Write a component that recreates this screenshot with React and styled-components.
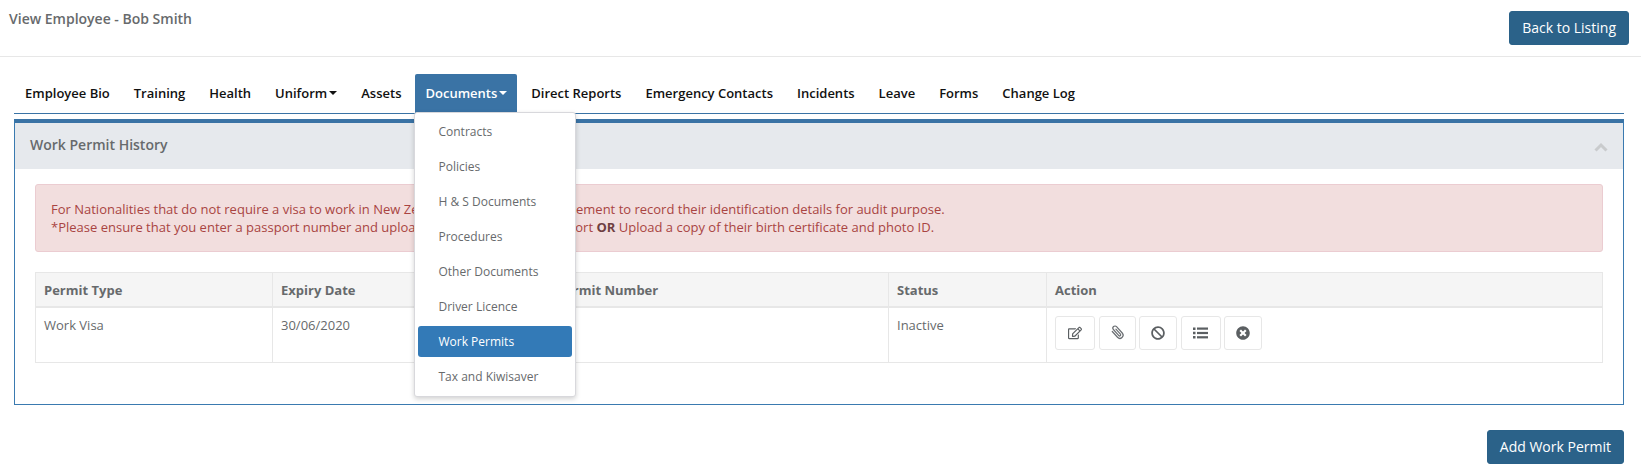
import React from "react";
import styled, { createGlobalStyle } from "styled-components";
import { FaRegEdit, FaBan, FaTimesCircle } from "react-icons/fa";

const Global = createGlobalStyle`
  html, body { margin: 0; padding: 0; background: #fff; }
  body { font-family: "Open Sans", sans-serif; font-size: 13px; color: #676a6c; line-height: 18px; }
`;

const Page = styled.div`
  width: 1641px;
  height: 475px;
  overflow: hidden;
`;
const Header = styled.header`
  height: 57px;
  box-sizing: border-box;
  border-bottom: 1px solid #e7e7e7;
  padding: 11px 12px 0 9px;
  display: flex;
  justify-content: space-between;
  align-items: flex-start;
`;
const Title = styled.h1`
  margin: -1px 0 0;
  font-size: 14px;
  font-weight: 600;
  line-height: 18px;
  color: #676a6c;
`;
const PrimaryButton = styled.button`
  height: 34px;
  padding: 0 12px;
  border: 1px solid #2a6188;
  border-radius: 3px;
  background: #2b6289;
  color: #fff;
  font: 400 14px/20px "Open Sans", sans-serif;
`;
const Content = styled.main`
  padding: 17px 17px 0 14px;
`;
const Tabs = styled.nav`
  display: flex;
  height: 39px;
  padding-left: 1px;
  border-bottom: 1px solid #3a73a5;
`;
const Tab = styled.div`
  position: relative;
  height: 39px;
  box-sizing: border-box;
  padding: 0 10px 2px;
  margin-right: 4px;
  display: flex;
  align-items: center;
  font-size: 13px;
  font-weight: 600;
  color: ${p => (p.$active ? "#fff" : "#111")};
  background: ${p => (p.$active ? "#3a73a5" : "transparent")};
  border-radius: 2px 2px 0 0;
`;
const Caret = styled.span`
  display: inline-block;
  margin-left: 2px;
  border-top: 4px solid currentColor;
  border-left: 4px solid transparent;
  border-right: 4px solid transparent;
`;
const Menu = styled.ul`
  position: absolute;
  z-index: 5;
  top: 38px;
  left: -1px;
  width: 162px;
  box-sizing: border-box;
  margin: 0;
  padding: 3px 3px 0;
  height: 285px;
  list-style: none;
  background: #fff;
  border: 1px solid #d8d8dc;
  border-radius: 3px;
  box-shadow: 0 2px 5px rgba(0, 0, 0, 0.18);
`;
const MenuItem = styled.li`
  height: 31px;
  margin-bottom: 4px;
  padding-left: 20px;
  display: flex;
  align-items: center;
  border-radius: 3px;
  font-size: 12px;
  font-weight: 400;
  color: ${p => (p.$active ? "#fff" : "#676a6c")};
  background: ${p => (p.$active ? "#337ab7" : "transparent")};
`;
const Panel = styled.section`
  margin-top: 5px;
  height: 286px;
  box-sizing: border-box;
  border: 1px solid #3a7ab0;
  border-top: 4px solid #3a73a5;
`;
const PanelHead = styled.div`
  height: 46px;
  padding: 0 15px 2px;
  box-sizing: border-box;
  display: flex;
  align-items: center;
  justify-content: space-between;
  background: #e6e9ed;
  font-size: 14px;
  font-weight: 600;
  color: #676a6c;
`;
const Toggle = styled.svg`
  width: 14px;
  height: 10px;
  margin: 4px 0 0 0;
  fill: none;
  stroke: #c9cbcd;
  stroke-width: 3;
`;
const PanelBody = styled.div`
  padding: 15px 20px 0;
`;
const Alert = styled.div`
  height: 68px;
  box-sizing: border-box;
  padding: 15px 15px;
  background: #f2dede;
  border: 1px solid #ebccd1;
  border-radius: 3px;
  color: #a94442;
  font-size: 13px;
  line-height: 18px;
  white-space: nowrap;
`;
const Strong = styled.b`
  color: #6f3f42;
`;
const Table = styled.table`
  margin-top: 20px;
  width: 1568px;
  table-layout: fixed;
  border-collapse: collapse;
  font-size: 13px;
`;
const Th = styled.th`
  height: 34px;
  padding: 1px 8px 0;
  box-sizing: border-box;
  background: #f5f5f5;
  border: 1px solid #e7e7e7;
  border-bottom-width: 2px;
  text-align: left;
  font-weight: 700;
  color: #676a6c;
`;
const Td = styled.td`
  height: 56px;
  padding: 8px;
  box-sizing: border-box;
  border: 1px solid #e7e7e7;
  vertical-align: top;
  color: #676a6c;
`;
const Actions = styled.div`
  display: flex;
  gap: 3.5px;
`;
const IconButton = styled.button`
  width: ${p => p.$w}px;
  height: 34px;
  padding: 0;
  display: flex;
  align-items: center;
  justify-content: center;
  background: #fff;
  border: 1px solid #e7e7e7;
  border-radius: 3px;
  color: #5b5f62;
  font-size: 14px;
`;
const Footer = styled.div`
  display: flex;
  justify-content: flex-end;
  margin-top: 25px;
`;

const ClipIcon = () => (
  <svg width="17" height="17" viewBox="0 0 24 24" fill="none" stroke="#6a6e72" strokeWidth="1.7" strokeLinecap="round">
    <path transform="rotate(-42 12 12)" d="M7.5 6v11a4.5 4.5 0 0 0 9 0V5a3 3 0 0 0-6 0v11.5a1.5 1.5 0 0 0 3 0V7" />
  </svg>
);
const ListIcon = () => (
  <svg width="15" height="12" viewBox="0 0 15 12" fill="#5b5f62">
    <rect x="0" y="0.5" width="2.5" height="2.5" />
    <rect x="0" y="4.75" width="2.5" height="2.5" />
    <rect x="0" y="9" width="2.5" height="2.5" />
    <rect x="4" y="0.5" width="11" height="2.2" />
    <rect x="4" y="4.9" width="11" height="2.2" />
    <rect x="4" y="9.2" width="11" height="2.2" />
  </svg>
);

const tabs = ["Employee Bio", "Training", "Health", "Uniform", "Assets", "Documents", "Direct Reports", "Emergency Contacts", "Incidents", "Leave", "Forms", "Change Log"];
const menu = ["Contracts", "Policies", "H & S Documents", "Procedures", "Other Documents", "Driver Licence", "Work Permits", "Tax and Kiwisaver"];

export default function App() {
  return (
    <Page>
      <Global />
      <Header>
        <Title>View Employee - Bob Smith</Title>
        <PrimaryButton>Back to Listing</PrimaryButton>
      </Header>
      <Content>
        <Tabs>
          {tabs.map(t => (
            <Tab key={t} $active={t === "Documents"}>
              {t}
              {(t === "Uniform" || t === "Documents") && <Caret />}
              {t === "Documents" && (
                <Menu>
                  {menu.map(m => (
                    <MenuItem key={m} $active={m === "Work Permits"}>{m}</MenuItem>
                  ))}
                </Menu>
              )}
            </Tab>
          ))}
        </Tabs>
        <Panel>
          <PanelHead>
            Work Permit History
            <Toggle viewBox="0 0 14 10"><polyline points="1.5,8.5 7,3 12.5,8.5" /></Toggle>
          </PanelHead>
          <PanelBody>
            <Alert>
              For Nationalities that do not require a visa to work in New Zealand there is still a requirement to record their identification details for audit purpose.
              <br />
              *Please ensure that you enter a passport number and upload a copy of the valid passport <Strong>OR</Strong> Upload a copy of their birth certificate and photo ID.
            </Alert>
            <Table>
              <colgroup>
                <col style={{ width: 237 }} />
                <col style={{ width: 276 }} />
                <col style={{ width: 340 }} />
                <col style={{ width: 158 }} />
                <col />
              </colgroup>
              <thead>
                <tr>
                  <Th>Permit Type</Th>
                  <Th>Expiry Date</Th>
                  <Th>Permit Number</Th>
                  <Th>Status</Th>
                  <Th>Action</Th>
                </tr>
              </thead>
              <tbody>
                <tr>
                  <Td>Work Visa</Td>
                  <Td>30/06/2020</Td>
                  <Td></Td>
                  <Td>Inactive</Td>
                  <Td>
                    <Actions>
                      <IconButton $w={40}><FaRegEdit /></IconButton>
                      <IconButton $w={37}><ClipIcon /></IconButton>
                      <IconButton $w={38}><FaBan /></IconButton>
                      <IconButton $w={40}><ListIcon /></IconButton>
                      <IconButton $w={38}><FaTimesCircle /></IconButton>
                    </Actions>
                  </Td>
                </tr>
              </tbody>
            </Table>
          </PanelBody>
        </Panel>
        <Footer>
          <PrimaryButton>Add Work Permit</PrimaryButton>
        </Footer>
      </Content>
    </Page>
  );
}
